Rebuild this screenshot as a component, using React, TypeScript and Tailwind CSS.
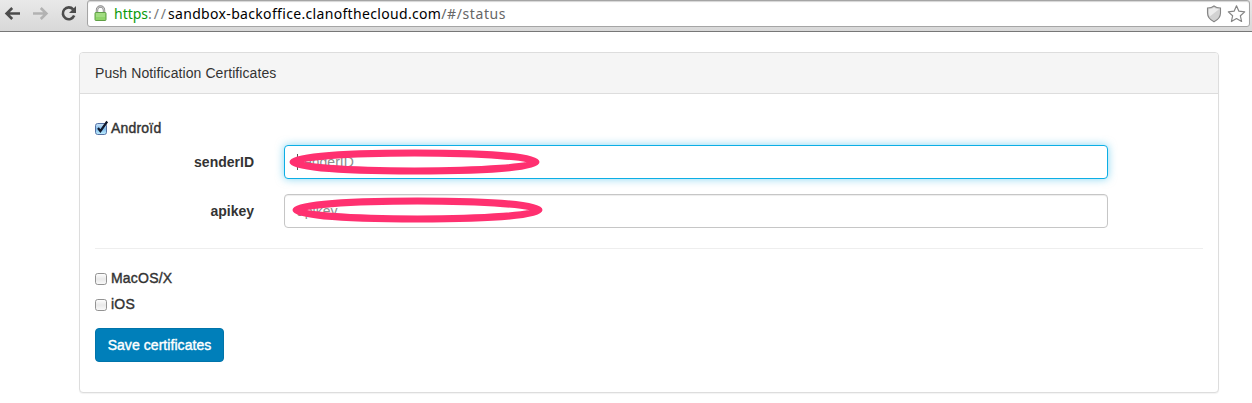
import type { ReactNode } from "react";

function BrowserBar() {
  return (
    <header className="flex h-8 items-start border-b border-[#777777] bg-linear-to-b from-[#e9e9e9] to-[#d8d8d8] pr-[2px]">
      <svg width="87" height="31" viewBox="0 0 87 31" fill="none" className="shrink-0">
        <g strokeWidth="2.6">
          <path d="M20 13.5H7M12.2 8L6.6 13.5L12.2 19" stroke="#4c4c4c" />
          <path d="M33 13.5H46M40.8 8L46.4 13.5L40.8 19" stroke="#b2b2b2" />
          <path d="M73.2 9.4A5.9 5.9 0 1 0 74.2 15.6" stroke="#4c4c4c" />
        </g>
        <path d="M76 6V13H69Z" fill="#4c4c4c" />
      </svg>
      <div className="flex h-[27px] grow items-center rounded-[3px] border border-[#a5a5a5] bg-white pr-[3px] pl-[6px] shadow-[inset_0_1px_1px_#d5d5d5]">
        <svg width="13" height="17" viewBox="0 0 13 17" fill="none" className="shrink-0">
          <path d="M3 8V5A3.5 3.5 0 0 1 10 5V8" stroke="#888888" strokeWidth="2.4" />
          <path d="M3 8V5A3.5 3.5 0 0 1 10 5V8" stroke="#d2d2d2" strokeWidth="0.9" />
          <rect x="1" y="7.5" width="11" height="8" rx="0.8" fill="#8fd46a" stroke="#5f9f45" />
          <path d="M2 9H11M2 11H11" stroke="#b4e498" />
        </svg>
        <span className="ml-[7px] font-['Noto_Sans',sans-serif] text-[14px] leading-[26px] whitespace-pre text-black">
          <span className="text-[#0a9a0a]">https</span>
          <span className="tracking-[1.9px] text-[#777777]">://</span>
          <span className="tracking-[0.33px]">sandbox-backoffice.clanofthecloud.com</span>
          <span className="tracking-[0.6px] text-[#666666]">/#/status</span>
        </span>
        <svg width="40" height="20" viewBox="0 0 40 20" fill="none" className="ml-auto shrink-0">
          <path d="M8 2C6.3 3.5 4 4 1.5 4V9C1.5 13.5 4.5 16 8 17.8C11.500 16 14.500 13.500 14.500 9V4C12 4 9.700 3.500 8 2Z" fill="#d2d2d2" stroke="#858585" strokeWidth="1.1" />
          <path d="M3 5.200C5 5 6.500 4.500 8 3.500C9.500 4.500 11 5 13 5.200L3.700 12.500C3 11 2.800 9 3 5.200Z" fill="#ececec" />
          <path d="M30.500 1.800L32.900 7.200L38.700 7.900L34.400 11.800L35.600 17.500L30.500 14.600L25.400 17.500L26.600 11.800L22.300 7.900L28.100 7.200Z" stroke="#858585" strokeWidth="1.2" strokeLinejoin="round" />
        </svg>
      </div>
    </header>
  );
}

function CheckRow({ checked = false, children }: { checked?: boolean; children: ReactNode }) {
  return (
    <label className="flex h-5 items-center">
      <svg width="14" height="16" viewBox="0 0 14 16" fill="none" className="mr-[2px] shrink-0">
        <defs>
          <linearGradient id="box-off" x2="0" y2="1">
            <stop stopColor="#ffffff" />
            <stop offset="0.5" stopColor="#e9e9e9" />
            <stop offset="1" stopColor="#fafafa" />
          </linearGradient>
          <linearGradient id="box-on" x2="0" y2="1">
            <stop stopColor="#cfe5f8" />
            <stop offset="0.5" stopColor="#82bdec" />
            <stop offset="1" stopColor="#c2f0ff" />
          </linearGradient>
        </defs>
        <rect
          x="0.5" y="3.500" width="11" height="11" rx="2.200"
          fill={checked ? "url(#box-on)" : "url(#box-off)"}
          stroke={checked ? "#5571a4" : "#939393"}
        />
        {checked && <path d="M3 8L5.400 11.200L12.200 1.500" stroke="#10182c" strokeWidth="2.200" />}
      </svg>
      <span className="tracking-[0.2px] [-webkit-text-stroke:0.4px_#333333]">{children}</span>
    </label>
  );
}

function Field({ name, focused = false, redaction }: { name: string; focused?: boolean; redaction: ReactNode }) {
  return (
    <div className="flex h-[34px] items-center">
      <span className="w-[159px] text-right font-bold">{name}</span>
      <div
        className={
          focused
            ? "relative ml-[30px] flex h-[34px] w-[824px] items-center rounded-[4px] border border-[#0caee5] bg-white px-3 shadow-[0_0_8px_rgba(12,174,229,0.5)]"
            : "relative ml-[30px] flex h-[34px] w-[824px] items-center rounded-[4px] border border-[#c6c6c6] bg-white px-3 shadow-[inset_0_1px_1px_rgba(0,0,0,0.075)]"
        }
      >
        {focused && <span className="-mr-px h-4 w-px bg-[#555555]" />}
        <span className="text-[#8c8c8c]">{name}</span>
        {redaction}
      </div>
    </div>
  );
}

export default function App() {
  return (
    <div className="h-[403px] w-[1252px] overflow-hidden bg-white font-['Liberation_Sans',sans-serif] text-[14px] leading-5 text-[#333333]">
      <BrowserBar />
      <section className="mt-5 ml-[79px] h-[341px] w-[1140px] rounded-[4px] border border-[#dddddd] bg-white shadow-[0_1px_1px_rgba(0,0,0,0.05)]">
        <h1 className="h-[41px] rounded-t-[3px] border-b border-[#dddddd] bg-[#f5f5f5] px-[15px] py-[10px] tracking-[0.08px]">
          Push Notification Certificates
        </h1>
        <div className="px-[15px] pt-6">
          <CheckRow checked>Androïd</CheckRow>
          <div className="mt-[7px] flex flex-col gap-[15px]">
            <Field
              name="senderID"
              focused
              redaction={
                <svg width="256" height="30" className="absolute top-[1px] left-[2px]">
                  <ellipse cx="127.500" cy="15" rx="121.500" ry="9" fill="none" stroke="#ff3070" strokeWidth="7" />
                </svg>
              }
            />
            <Field
              name="apikey"
              redaction={
                <svg width="256" height="30" className="absolute top-0 left-[5px]">
                  <ellipse cx="127.500" cy="15" rx="121.500" ry="9" fill="none" stroke="#ff3070" strokeWidth="7" />
                </svg>
              }
            />
          </div>
          <hr className="mt-5 mb-[19px] border-t border-[#eeeeee]" />
          <div className="flex flex-col gap-[6px]">
            <CheckRow>MacOS/X</CheckRow>
            <CheckRow>iOS</CheckRow>
          </div>
          <button className="mt-[14px] h-[34px] w-[129px] rounded-[4px] border border-[#0074aa] bg-[#007fba] tracking-[0.06px] text-white [-webkit-text-stroke:0.4px_white]">
            Save certificates
          </button>
        </div>
      </section>
    </div>
  );
}
